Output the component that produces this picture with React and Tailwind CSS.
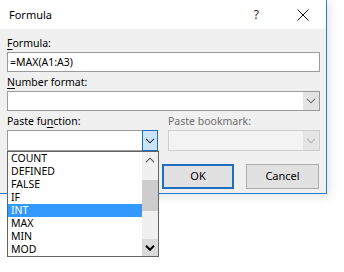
import React from 'react';

const Chevron = ({ className = '' }) => (
    <svg width="10" height="6" viewBox="0 0 10 6" className={className}>
        <polyline points="1,0.8 5,4.8 9,0.8" fill="none" stroke="currentColor" strokeWidth="1.1" />
    </svg>
);

const items = ['COUNT', 'DEFINED', 'FALSE', 'IF', 'INT', 'MAX', 'MIN', 'MOD'];

const App = () => {
    return (
        <div className="relative w-[344px] h-[272px] bg-white overflow-hidden text-[10.5px] text-black" style={{ fontFamily: '"Noto Sans", sans-serif' }}>
            {/* Dialog */}
            <div className="w-[327px] h-[194px] flex flex-col bg-[#f0f0f0] border-r border-b border-[#2b7bd4] shadow-[2px_2px_10px_rgba(0,0,0,0.12)]">
                {/* Title bar */}
                <div className="h-[29px] shrink-0 bg-white flex items-center pl-[9px]">
                    <span className="text-[11px] leading-none">Formula</span>
                    <span className="ml-auto text-[12px] leading-none mr-[38px] text-[#222]">?</span>
                    <svg width="12" height="12" viewBox="0 0 12 12" className="mr-[17px]">
                        <path d="M0.5 0.5 L11.5 11.5 M11.5 0.5 L0.5 11.5" stroke="#111" strokeWidth="1" />
                    </svg>
                </div>

                {/* Body */}
                <div className="flex flex-col pl-[7px] pr-[6px] pt-[8px]">
                    <div className="h-[13px] leading-[13px] mb-[2px]"><span className="underline underline-offset-2">F</span>ormula:</div>
                    <div className="h-[20px] w-[313px] bg-white border border-[#9a9a9a] flex items-center pl-[2px] leading-none">=MAX(A1:A3)</div>

                    <div className="h-[13px] leading-[13px] mt-[4px] mb-[2px]"><span className="underline underline-offset-2">N</span>umber format:</div>
                    <div className="h-[20px] w-[313px] bg-white border border-[#9a9a9a] flex justify-end">
                        <div className="w-[16px] h-full bg-[#e3e3e3] flex items-center justify-center text-[#707070]">
                            <Chevron />
                        </div>
                    </div>

                    <div className="h-[13px] leading-[13px] mt-[4px] mb-[2px] flex">
                        <span className="w-[161px]">Paste fu<span className="underline underline-offset-2">n</span>ction:</span>
                        <span className="text-[#6d6d6d]">Paste bookmark:</span>
                    </div>
                    <div className="flex gap-[10px]">
                        <div className="h-[21px] w-[151px] bg-white border border-[#9a9a9a] flex justify-end">
                            <div className="w-[16px] h-[21px] -mt-px -mr-px bg-[#cce4f7] border border-[#1a6fc4] flex items-center justify-center text-[#333]">
                                <Chevron />
                            </div>
                        </div>
                        <div className="h-[21px] w-[152px] bg-[#f3f3f3] border border-[#cfcfcf] flex justify-end">
                            <div className="w-[16px] h-full bg-[#e5e5e5] flex items-center justify-center text-[#b5b5b5]">
                                <Chevron />
                            </div>
                        </div>
                    </div>

                    <div className="flex mt-[13px] pl-[155px] gap-[12px]">
                        <div className="w-[72px] h-[25px] bg-[#e1e1e1] border-2 border-[#1f6fbf] flex items-center justify-center text-[11px]">OK</div>
                        <div className="w-[73px] h-[25px] bg-[#e1e1e1] border border-[#adadad] flex items-center justify-center text-[11px]">Cancel</div>
                    </div>
                </div>
            </div>

            {/* Open dropdown list */}
            <div className="absolute left-[7px] top-[151px] w-[152px] h-[106px] bg-white border border-[#646464] flex">
                <div className="w-[134px] flex flex-col">
                    {items.map((item) => (
                        <div key={item} className={`h-[13px] leading-[13px] pl-[3px] ${item === 'INT' ? 'bg-[#3399ff] text-white' : ''}`}>{item}</div>
                    ))}
                </div>
                <div className="w-[16px] bg-[#f0f0f0] flex flex-col">
                    <div className="h-[16px] flex items-center justify-center text-[#505050]">
                        <Chevron className="rotate-180" />
                    </div>
                    <div className="h-[12px]"></div>
                    <div className="h-[31px] bg-[#cdcdcd]"></div>
                    <div className="flex-1"></div>
                    <div className="h-[17px] bg-[#dadada] flex items-center justify-center text-black">
                        <svg width="10" height="6" viewBox="0 0 10 6">
                            <polyline points="1,0.8 5,4.8 9,0.8" fill="none" stroke="currentColor" strokeWidth="2" />
                        </svg>
                    </div>
                </div>
            </div>
        </div>
    );
};

export default App;
